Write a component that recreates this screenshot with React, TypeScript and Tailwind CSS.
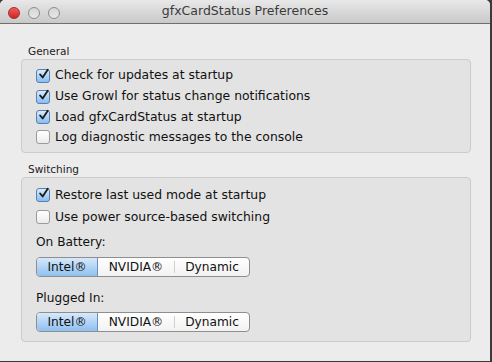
import React from 'react';

const font = { fontFamily: '"DejaVu Sans", "Noto Sans", sans-serif' };

function Check({ checked, label, h = 'h-[20px]' }: { checked: boolean; label: string; h?: string }) {
  return (
    <div className={`flex ${h} items-center gap-[5px]`}>
      {checked ? (
        <span className="flex h-[14px] w-[14px] items-center justify-center rounded-[3px] border border-[#5a7fae] bg-gradient-to-b from-[#d8ecfd] to-[#86bdf1]">
          <svg width="13" height="13" viewBox="0 0 13 13" className="-mt-[3px] ml-[1px]">
            <path d="M2.5 6.5 L5.5 10 L11.5 1" fill="none" stroke="#1d1d1d" strokeWidth="2.2" strokeLinecap="round" strokeLinejoin="round" />
          </svg>
        </span>
      ) : (
        <span className="h-[14px] w-[14px] rounded-[3px] border border-[#9a9a9a] bg-gradient-to-b from-[#ffffff] to-[#ececec]" />
      )}
      <span className="text-[12.4px] text-[#111]">{label}</span>
    </div>
  );
}

function Segmented() {
  const items = ['Intel®', 'NVIDIA®', 'Dynamic'];
  return (
    <div className="flex h-[20px] w-[214px] overflow-hidden rounded-[4px] border border-[#8e8e8e] bg-gradient-to-b from-[#ffffff] to-[#f2f2f2] text-[12.2px] text-[#111]">
      {items.map((it, i) => (
        <div
          key={it}
          className={`flex items-center justify-center ${
            i === 0
              ? 'w-[61px] bg-gradient-to-b from-[#d6e9fb] to-[#8fc0ef] border-r border-[#6b8fbf]'
              : i === 1
                ? 'w-[76px]'
                : 'flex-1 border-l border-[#cfcfcf] my-[3px]'
          }`}
        >
          {it}
        </div>
      ))}
    </div>
  );
}

export default function App() {
  return (
    <div className="h-[362px] w-[492px] overflow-hidden bg-[#3a3a3a]" style={font}>
      <div className="flex h-[361px] w-[490px] flex-col overflow-hidden rounded-t-[5px] bg-[#ececec]">
        <div className="relative flex h-[24px] items-center justify-center border-b border-[#6f6f6f] bg-gradient-to-b from-[#e8e8e8] to-[#c9c9c9]">
          <div className="absolute left-[8px] top-[7px] flex gap-[8px]">
            <span className="h-[12px] w-[12px] rounded-full border border-[#a03030] bg-gradient-to-b from-[#f25a5a] to-[#d42020]" />
            <span className="h-[12px] w-[12px] rounded-full border border-[#8c8c8c] bg-gradient-to-b from-[#d6d6d6] to-[#e8e8e8]" />
            <span className="h-[12px] w-[12px] rounded-full border border-[#8c8c8c] bg-gradient-to-b from-[#d6d6d6] to-[#e8e8e8]" />
          </div>
          <span className="text-[12.5px] text-[#3a3a3a]">gfxCardStatus Preferences</span>
        </div>

        <div className="flex flex-col px-[21px] pt-[20px]">
          <div className="pl-[7px] text-[10.5px] leading-[14px] text-[#222]">General</div>
          <div className="mt-[1px] flex w-[450px] flex-col rounded-[4px] border border-[#cbcbcb] bg-[#e3e3e3] pb-[5px] pl-[14px] pt-[5px]">
            <Check checked label="Check for updates at startup" h="h-[21px]" />
            <Check checked label="Use Growl for status change notifications" h="h-[21px]" />
            <Check checked label="Load gfxCardStatus at startup" h="h-[20px]" />
            <Check checked={false} label="Log diagnostic messages to the console" h="h-[20px]" />
          </div>

          <div className="mt-[9px] pl-[7px] text-[10.5px] leading-[14px] text-[#222]">Switching</div>
          <div className="mt-[1px] flex h-[165px] w-[450px] flex-col rounded-[4px] border border-[#cbcbcb] bg-[#e3e3e3] pl-[14px] pt-[6px]">
            <Check checked label="Restore last used mode at startup" h="h-[22px]" />
            <Check checked={false} label="Use power source-based switching" h="h-[22px]" />
            <div className="mt-[6px] text-[12.2px] leading-[16px] text-[#111]">On Battery:</div>
            <div className="mt-[7px]">
              <Segmented />
            </div>
            <div className="mt-[13px] text-[12.2px] leading-[16px] text-[#111]">Plugged In:</div>
            <div className="mt-[6px]">
              <Segmented />
            </div>
          </div>
        </div>
      </div>
    </div>
  );
}
